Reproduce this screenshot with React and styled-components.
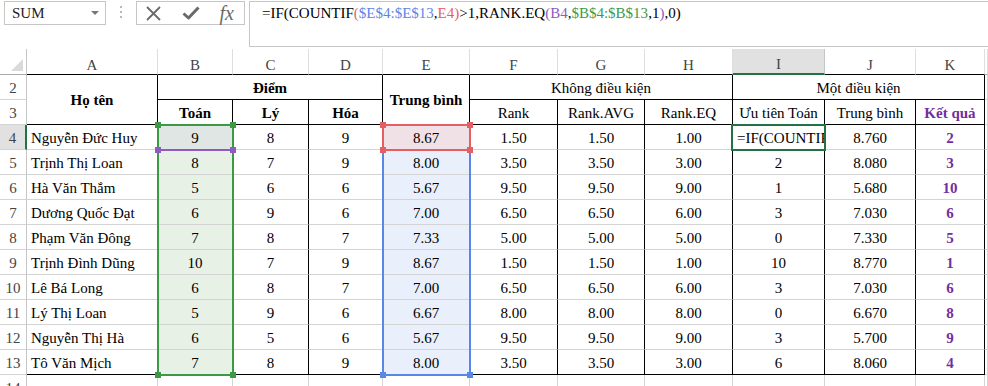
import React from "react";
import styled, { createGlobalStyle } from "styled-components";

const GRID = "#d4d4d4";
const INK = "#000";

const COLS = ["A", "B", "C", "D", "E", "F", "G", "H", "I", "J", "K"];

const rows = [
  ["Nguyễn Đức Huy", "9", "8", "9", "8.67", "1.50", "1.50", "1.00", "=IF(COUNTIF", "8.760", "2"],
  ["Trịnh Thị Loan", "8", "7", "9", "8.00", "3.50", "3.50", "3.00", "2", "8.080", "3"],
  ["Hà Văn Thắm", "5", "6", "6", "5.67", "9.50", "9.50", "9.00", "1", "5.680", "10"],
  ["Dương Quốc Đạt", "6", "9", "6", "7.00", "6.50", "6.50", "6.00", "3", "7.030", "6"],
  ["Phạm Văn Đông", "7", "8", "7", "7.33", "5.00", "5.00", "5.00", "0", "7.330", "5"],
  ["Trịnh Đình Dũng", "10", "7", "9", "8.67", "1.50", "1.50", "1.00", "10", "8.770", "1"],
  ["Lê Bá Long", "6", "8", "7", "7.00", "6.50", "6.50", "6.00", "3", "7.030", "6"],
  ["Lý Thị Loan", "5", "9", "6", "6.67", "8.00", "8.00", "8.00", "0", "6.670", "8"],
  ["Nguyễn Thị Hà", "6", "5", "6", "5.67", "9.50", "9.50", "9.00", "3", "5.700", "9"],
  ["Tô Văn Mịch", "7", "8", "9", "8.00", "3.50", "3.50", "3.00", "6", "8.060", "4"],
];

const GlobalStyle = createGlobalStyle`
  body {
    margin: 0;
    background: #fff;
    font-family: "Liberation Serif", "Times New Roman", serif;
    overflow: hidden;
  }
`;

const Page = styled.div`
  width: 988px;
  height: 386px;
  overflow: hidden;
  background: #fff;
`;

// formula bar

const FormulaBar = styled.div`
  display: flex;
  align-items: flex-start;
  height: 49px;
  padding: 1px 0 0 4px;
  box-sizing: border-box;
`;

const NameBox = styled.div`
  display: flex;
  align-items: center;
  justify-content: space-between;
  width: 102px;
  height: 24px;
  box-sizing: border-box;
  border: 1px solid #c6c6c6;
  padding: 0 6px 0 7px;
  font-size: 15px;
  color: #222;
`;

const Arrow = styled.span`
  width: 0;
  height: 0;
  border-left: 4px solid transparent;
  border-right: 4px solid transparent;
  border-top: 4px solid #777;
`;

const Grip = styled.div`
  width: 2px;
  height: 14px;
  margin: 5px 14px 0 14px;
  background: repeating-linear-gradient(#b8b8b8 0 2px, transparent 2px 5px);
`;

const IconBox = styled.div`
  display: flex;
  align-items: center;
  justify-content: space-between;
  width: 109px;
  height: 24px;
  box-sizing: border-box;
  border: 1px solid #c6c6c6;
  padding: 0 10px 0 8px;
`;

const Fx = styled.span`
  font-style: italic;
  font-size: 20px;
  color: #6a6a6a;
  line-height: 1;
`;

const FormulaInput = styled.div`
  flex: 1;
  height: 46px;
  margin-left: 4px;
  box-sizing: border-box;
  border: 1px solid #c6c6c6;
  border-right: none;
  padding: 3px 0 0 12px;
  font-size: 15px;
  color: #000;
  white-space: nowrap;
`;

const Ref = styled.span`
  color: ${(p) => p.$c};
`;

// grid

const Sheet = styled.div`
  display: grid;
  grid-template-columns: 27px 131px 75px 76px 74px 87px 88px 87px 88px 92px 91px 69px 1fr;
  grid-template-rows: 26px repeat(13, 25px);
  font-size: 15px;
`;

const Corner = styled.div`
  grid-column: 1;
  grid-row: 1;
  position: relative;
  border-right: 1px solid #c6c6c6;
  border-bottom: 1px solid #ababab;

  &::after {
    content: "";
    position: absolute;
    right: 3px;
    bottom: 3px;
    border-left: 12px solid transparent;
    border-bottom: 12px solid #dadada;
  }
`;

const ColHead = styled.div`
  grid-column: ${(p) => p.$col};
  grid-row: 1;
  display: flex;
  align-items: flex-end;
  justify-content: center;
  padding-bottom: 0;
  box-sizing: border-box;
  color: #444;
  background: ${(p) => (p.$active ? "#e1e1e1" : "#fff")};
  border-right: 1px solid ${(p) => (p.$active ? "#c6c6c6" : "#dedede")};
  border-bottom: ${(p) => (p.$active ? "2px solid #217346" : p.$edge ? `1px solid ${INK}` : "1px solid #ababab")};
`;

const RowHead = styled.div`
  grid-column: 1;
  grid-row: ${(p) => p.$row};
  display: flex;
  align-items: center;
  justify-content: center;
  padding-top: 2px;
  box-sizing: border-box;
  color: #444;
  background: ${(p) => (p.$active ? "#e1e1e1" : "#fff")};
  border-right: ${(p) => (p.$active ? "2px solid #217346" : "1px solid #c6c6c6")};
  border-bottom: 1px solid ${GRID};
`;

const Cell = styled.div`
  grid-column: ${(p) => p.$col};
  grid-row: ${(p) => p.$row};
  display: flex;
  align-items: center;
  justify-content: ${(p) => (p.$left ? "flex-start" : "center")};
  padding: 2px ${(p) => (p.$left ? "0 0 4px" : "0 0 0")};
  box-sizing: border-box;
  overflow: hidden;
  white-space: nowrap;
  background: ${(p) => p.$bg || "#fff"};
  color: ${(p) => p.$color || "#000"};
  font-weight: ${(p) => (p.$bold ? 700 : 400)};
  border-right: 1px solid ${(p) => (p.$r ? INK : GRID)};
  border-bottom: 1px solid ${(p) => (p.$b ? INK : GRID)};
`;

const Range = styled.div`
  grid-column: ${(p) => p.$col};
  grid-row: ${(p) => p.$row};
  position: relative;
  margin: -1px -1px -1px -1px;
  border: 2px solid ${(p) => p.$c};
  ${(p) => p.$noTop && "border-top-color: transparent;"}
  pointer-events: none;
`;

const Handle = styled.span`
  position: absolute;
  z-index: 3;
  width: 6px;
  height: 6px;
  background: ${(p) => p.$c};
  ${(p) => (p.$y === "t" ? "top: -4px;" : "bottom: -4px;")}
  ${(p) => (p.$x === "l" ? "left: -4px;" : "right: -4px;")}
`;

const ActiveCell = styled.div`
  grid-column: 10;
  grid-row: 4;
  position: relative;
  z-index: 2;
  margin: -1px -1px -1px -2px;
  border: 2px solid #217346;
  pointer-events: none;
`;

const XIcon = () => (
  <svg width="17" height="17" viewBox="0 0 17 17">
    <path d="M2 2 L15 15 M15 2 L2 15" stroke="#6a6a6a" strokeWidth="1.8" fill="none" />
  </svg>
);

const CheckIcon = () => (
  <svg width="18" height="16" viewBox="0 0 18 16">
    <path d="M1.5 8.5 L6.5 13 L16.5 2.5" stroke="#6a6a6a" strokeWidth="3" fill="none" strokeLinejoin="round" />
  </svg>
);

const App = () => {
  const cellBg = (c, i) => {
    if (c === 1) return i === 0 ? "#dfe6e3" : "#e8f1e6";
    if (c === 4) return i === 0 ? "#f0e1e7" : "#e9effb";
    return null;
  };

  return (
    <Page>
      <GlobalStyle />
      <FormulaBar>
        <NameBox>
          SUM
          <Arrow />
        </NameBox>
        <Grip />
        <IconBox>
          <XIcon />
          <CheckIcon />
          <Fx>fx</Fx>
        </IconBox>
        <FormulaInput>
          =IF(COUNTIF<Ref $c="#e35f63">(</Ref>
          <Ref $c="#5a87e6">$E$4:$E$13</Ref>,<Ref $c="#e35f63">E4)</Ref>
          &gt;1,RANK.EQ<Ref $c="#8e5bbf">(B4</Ref>,<Ref $c="#3c9a47">$B$4:$B$13</Ref>,1<Ref $c="#8e5bbf">)</Ref>,0)
        </FormulaInput>
      </FormulaBar>

      <Sheet>
        <Corner />
        {COLS.map((c, i) => (
          <ColHead key={c} $col={i + 2} $active={c === "I"} $edge>
            {c}
          </ColHead>
        ))}
        <ColHead $col={13} />

        {Array.from({ length: 13 }, (_, i) => (
          <RowHead key={i} $row={i + 2} $active={i + 2 === 4}>
            {i + 2}
          </RowHead>
        ))}

        {/* header rows 2-3 */}
        <Cell $col="2" $row="2 / span 2" $r $b $bold>Họ tên</Cell>
        <Cell $col="3 / span 3" $row="2" $r $b $bold>Điểm</Cell>
        <Cell $col="3" $row="3" $r $b $bold>Toán</Cell>
        <Cell $col="4" $row="3" $r $b $bold>Lý</Cell>
        <Cell $col="5" $row="3" $r $b $bold>Hóa</Cell>
        <Cell $col="6" $row="2 / span 2" $r $b $bold>Trung bình</Cell>
        <Cell $col="7 / span 3" $row="2" $r $b>Không điều kiện</Cell>
        <Cell $col="7" $row="3" $r $b>Rank</Cell>
        <Cell $col="8" $row="3" $r $b>Rank.AVG</Cell>
        <Cell $col="9" $row="3" $r $b>Rank.EQ</Cell>
        <Cell $col="10 / span 3" $row="2" $r $b>Một điều kiện</Cell>
        <Cell $col="10" $row="3" $r $b>Ưu tiên Toán</Cell>
        <Cell $col="11" $row="3" $r $b>Trung bình</Cell>
        <Cell $col="12" $row="3" $r $b $bold $color="#7030a0">Kết quả</Cell>
        <Cell $col="13" $row="2" />
        <Cell $col="13" $row="3" />

        {rows.map((r, i) =>
          r.map((v, c) => (
            <Cell
              key={`${i}-${c}`}
              $col={c + 2}
              $row={i + 4}
              $r
              $b={i === rows.length - 1}
              $left={c === 0 || (c === 8 && i === 0)}
              $bg={cellBg(c, i)}
              $bold={c === 10}
              $color={c === 10 ? "#7030a0" : null}
            >
              {v}
            </Cell>
          ))
        )}
        {rows.map((_, i) => (
          <Cell key={`x${i}`} $col={13} $row={i + 4} />
        ))}
        {Array.from({ length: 12 }, (_, c) => (
          <Cell key={`r14-${c}`} $col={c + 2} $row={14} />
        ))}

        {/* reference highlights from the formula being edited */}
        <Range $col="6" $row="4 / span 10" $c="#5a87e6" $noTop>
          <Handle $c="#5a87e6" $y="b" $x="l" />
          <Handle $c="#5a87e6" $y="b" $x="r" />
        </Range>
        <Range $col="6" $row="4" $c="#e35f63">
          <Handle $c="#e35f63" $y="t" $x="l" />
          <Handle $c="#e35f63" $y="t" $x="r" />
          <Handle $c="#e35f63" $y="b" $x="l" />
          <Handle $c="#e35f63" $y="b" $x="r" />
        </Range>
        <Range $col="3" $row="4" $c="#8e5bbf">
          <Handle $c="#8e5bbf" $y="b" $x="l" />
          <Handle $c="#8e5bbf" $y="b" $x="r" />
        </Range>
        <Range $col="3" $row="4 / span 10" $c="#3c9a47">
          <Handle $c="#3c9a47" $y="t" $x="l" />
          <Handle $c="#3c9a47" $y="t" $x="r" />
          <Handle $c="#3c9a47" $y="b" $x="l" />
          <Handle $c="#3c9a47" $y="b" $x="r" />
        </Range>
        <ActiveCell />
      </Sheet>
    </Page>
  );
};

export default App;
